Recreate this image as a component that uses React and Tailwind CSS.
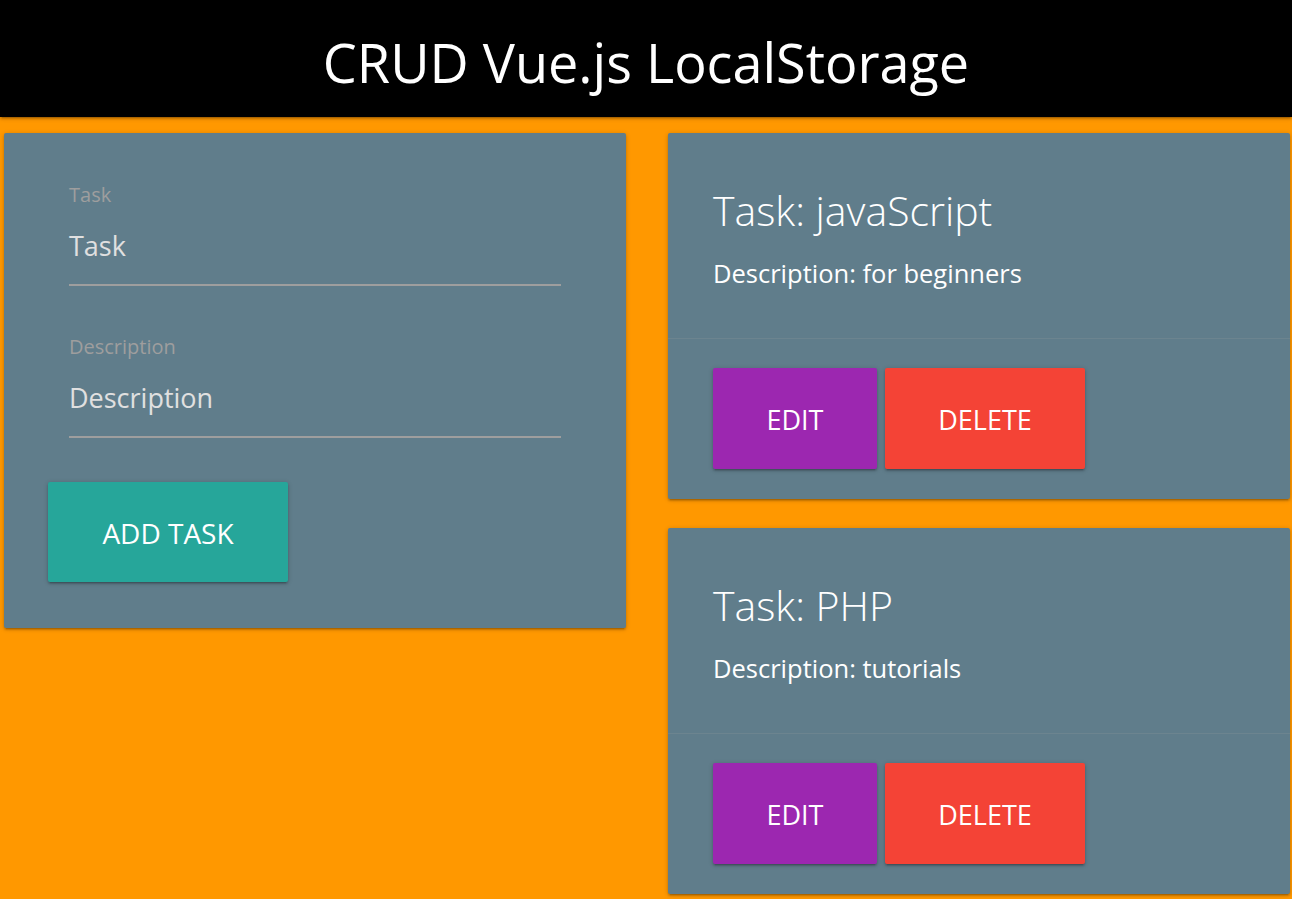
import React from "react";

const shadow = "shadow-[0_2px_2px_0_rgba(0,0,0,0.14),0_3px_1px_-2px_rgba(0,0,0,0.12),0_1px_5px_0_rgba(0,0,0,0.2)]";

function Field({ label, placeholder, first }) {
  return (
    <div className={`mx-[21px] ${first ? "" : "mt-[49px]"}`}>
      <div className="text-[20px] leading-[24px] text-[#9e9e9e]">{label}</div>
      <div className="h-[79px] flex items-center border-b-2 border-[#9e9e9e] text-[27px] text-[#e0e0e0] pt-[2px]">
        {placeholder}
      </div>
    </div>
  );
}

function TaskCard({ title, desc }) {
  return (
    <div className={`w-[622px] h-[366px] bg-[#607d8b] rounded-[2px] flex flex-col ${shadow}`}>
      <div className="h-[205px] px-[45px] pt-[52px] text-white">
        <div className="text-[41px] leading-[50px] font-light">{title}</div>
        <div className="text-[25.5px] leading-[32px] mt-[22px]">{desc}</div>
      </div>
      <div className="border-t border-[rgba(160,160,160,0.2)] px-[45px] pt-[29px] flex gap-[8px]">
        <button className={`w-[164px] h-[101px] bg-[#9c27b0] text-white text-[27px] pt-[3px] rounded-[2px] ${shadow}`}>EDIT</button>
        <button className={`w-[200px] h-[101px] bg-[#f44336] text-white text-[27px] pt-[3px] rounded-[2px] ${shadow}`}>DELETE</button>
      </div>
    </div>
  );
}

export default function App() {
  return (
    <div className="min-h-[899px] bg-[#ff9800] font-['Open_Sans','Noto_Sans',sans-serif] overflow-hidden">
      <div className={`h-[117px] bg-black flex items-center justify-center pt-[6px] ${shadow}`}>
        <h1 className="text-white text-[54px] leading-none">CRUD Vue.js LocalStorage</h1>
      </div>
      <div className="flex gap-[42px] pl-[4px] pt-[16px]">
        <div className={`w-[622px] h-[495px] bg-[#607d8b] rounded-[2px] px-[44px] pt-[50px] ${shadow}`}>
          <Field label="Task" placeholder="Task" first />
          <Field label="Description" placeholder="Description" />
          <button className={`mt-[44px] w-[240px] h-[100px] bg-[#26a69a] text-white text-[28px] pt-[2px] rounded-[2px] ${shadow}`}>ADD TASK</button>
        </div>
        <div className="flex flex-col gap-[29px]">
          <TaskCard title="Task: javaScript" desc="Description: for beginners" />
          <TaskCard title="Task: PHP" desc="Description: tutorials" />
        </div>
      </div>
    </div>
  );
}
